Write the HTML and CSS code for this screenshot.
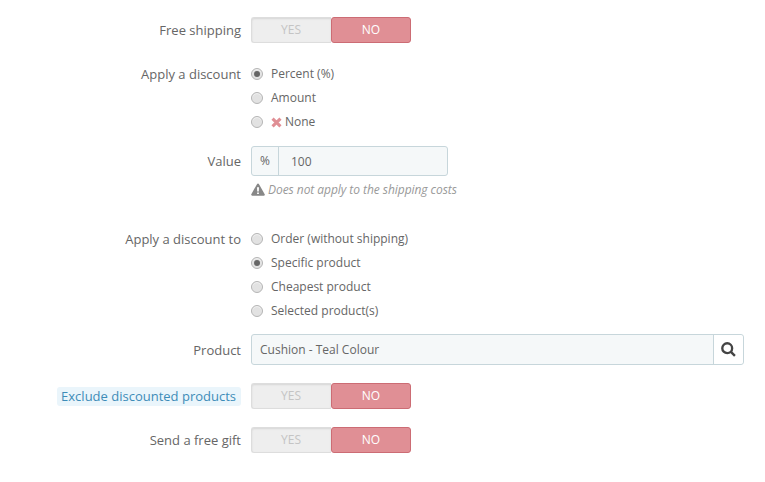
FILE: index.html
```html
<!DOCTYPE html>
<html lang="en">
<head>
  <meta charset="UTF-8" />
  <title>Cart rule actions</title>
  <meta name="viewport" content="width=device-width, initial-scale=1.0" />
  <link rel="stylesheet" href="styles.css">
</head>
<body>
  <div class="form">
    <div class="form-row row-shipping">
      <label class="row-label">Free shipping</label>
      <div class="switch"><span class="switch-yes">YES</span><span class="switch-no">NO</span></div>
    </div>

    <div class="form-row row-discount">
      <label class="row-label radio-label">Apply a discount</label>
      <div class="radio-list">
        <div class="radio-item"><span class="radio checked"></span>Percent (%)</div>
        <div class="radio-item"><span class="radio"></span>Amount</div>
        <div class="radio-item">
          <span class="radio"></span>
          <svg class="icon-x" viewBox="0 0 10 10"><path d="M1.4 1.4 8.600 8.600M8.600 1.400 1.400 8.600"/></svg>None
        </div>
      </div>
    </div>

    <div class="form-row row-value">
      <label class="row-label">Value</label>
      <div class="value-col">
        <div class="input-group value-group">
          <span class="addon">%</span>
          <span class="field">100</span>
        </div>
        <p class="help">
          <svg class="icon-warn" viewBox="0 0 14 13"><path fill-rule="evenodd" d="M7 .4c.4 0 .7.2.9.5l5.800 10.400c.4.7-.1 1.400-.9 1.400H1.200c-.8 0-1.300-.7-.9-1.400L6.100.9c.2-.3.5-.5.9-.5zM6 4.200l.2 4.300h1.600L8 4.200zM6.100 9.500v1.600h1.800V9.500z"/></svg>
          Does not apply to the shipping costs
        </p>
      </div>
    </div>

    <div class="form-row row-target">
      <label class="row-label radio-label">Apply a discount to</label>
      <div class="radio-list">
        <div class="radio-item"><span class="radio"></span>Order (without shipping)</div>
        <div class="radio-item"><span class="radio checked"></span>Specific product</div>
        <div class="radio-item"><span class="radio"></span>Cheapest product</div>
        <div class="radio-item"><span class="radio"></span>Selected product(s)</div>
      </div>
    </div>

    <div class="form-row row-product">
      <label class="row-label">Product</label>
      <div class="input-group product-group">
        <span class="field">Cushion - Teal Colour</span>
        <span class="search-btn">
          <svg class="icon-search" viewBox="0 0 14 14"><circle cx="5.800" cy="5.800" r="4.600"/><path d="M9 9l4 4"/></svg>
        </span>
      </div>
    </div>

    <div class="form-row row-exclude">
      <label class="row-label"><span class="hint">Exclude discounted products</span></label>
      <div class="switch"><span class="switch-yes">YES</span><span class="switch-no">NO</span></div>
    </div>

    <div class="form-row row-gift">
      <label class="row-label">Send a free gift</label>
      <div class="switch"><span class="switch-yes">YES</span><span class="switch-no">NO</span></div>
    </div>
  </div>
</body>
</html>
```

FILE: styles.css
```css
* { box-sizing: border-box; }
body { margin: 0; font-family: 'Open Sans', sans-serif; font-size: 12px; color: #666; background: #fff; }

.form { padding: 17px 21px 0 0; }
.form-row { display: flex; align-items: center; }
.row-label { flex: 0 0 241px; text-align: right; font-size: 13px; color: #666; }
.radio-label { align-self: flex-start; line-height: 24px; }

.row-discount { margin-top: 19px; align-items: flex-start; }
.row-value { margin-top: 12px; align-items: flex-start; }
.row-value .row-label { line-height: 30px; }
.row-target { margin-top: 29px; align-items: flex-start; }
.row-product { margin-top: 11px; }
.row-exclude { margin-top: 18px; }
.row-gift { margin-top: 18px; }

/* yes / no switch */
.switch { display: flex; width: 160px; height: 26px; margin-left: 10px; font-size: 12px; line-height: 24px; text-align: center; }
.switch-yes {
  flex: 1; padding-right: 1px; color: #c4c4c4; background: #eee; border: 1px solid #ddd; border-right: 0;
  border-radius: 3px 0 0 3px; box-shadow: inset 0 1px 2px rgba(0,0,0,.1);
}
.switch-no { flex: 1; color: #fff; background: #e08f95; border: 1px solid #cc6c74; border-radius: 3px; }

/* radios */
.radio-list { margin-left: 10px; }
.radio-item { display: flex; align-items: center; height: 24px; padding-bottom: 2px; color: #666; }
.radio {
  width: 12px; height: 12px; margin: 2px 8px 0 0; border: 1px solid #b5b5b5; border-radius: 50%;
  background: #e2e2e2; box-shadow: inset 0 1px 1px rgba(255,255,255,.6);
  display: flex; align-items: center; justify-content: center;
}
.radio.checked::after { content: ""; width: 6px; height: 6px; border-radius: 50%; background: #666; }
.icon-x { width: 11px; height: 11px; margin: 2px 3px 0 0; }
.icon-x path { fill: none; stroke: #e08f95; stroke-width: 2.800; }

/* inputs */
.input-group { display: flex; margin-left: 10px; background: #f5f8f9; border: 1px solid #c7d6db; border-radius: 3px; }
.value-group { width: 197px; height: 30px; }
.product-group { width: 493px; height: 31px; }
.addon { width: 27px; border-right: 1px solid #c7d6db; text-align: center; line-height: 28px; font-size: 12px; }
.field { flex: 1; padding-left: 8px; line-height: 30px; color: #666; }
.value-group .field { padding-left: 12px; line-height: 29px; }
.search-btn { width: 30px; display: flex; align-items: center; justify-content: center; background: #fff; border-left: 1px solid #c7d6db; border-radius: 0 3px 3px 0; }
.icon-search { width: 15px; height: 15px; }
.icon-search circle, .icon-search path { fill: none; stroke: #444; stroke-width: 2.200; }

.help { display: flex; align-items: center; margin: 4px 0 0 10px; height: 18px; font-size: 12px; font-style: italic; letter-spacing: -.05px; color: #999; }
.icon-warn { width: 14px; height: 13px; margin-right: 3px; fill: #888; }

.hint { display: inline-block; padding: 0 5px 0 4px; line-height: 19px; color: #3d8cb8; background: #eaf5fb; border-radius: 3px; }
```
